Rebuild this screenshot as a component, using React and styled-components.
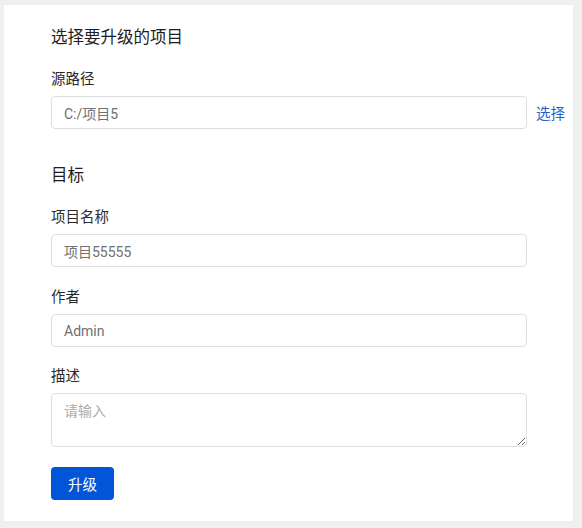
import React from 'react';
import styled, { createGlobalStyle } from 'styled-components';

const GlobalStyle = createGlobalStyle`
  html, body {
    margin: 0;
    padding: 0;
    background: #efefef;
  }
  body {
    font-family: Roboto, "Noto Sans CJK SC", sans-serif;
    color: #222;
  }
`;

const Page = styled.div`
  padding: 5px 9px 7px 4px;
`;

const Card = styled.div`
  background: #fff;
  height: 516px;
  box-sizing: border-box;
  padding: 21px 0 0 47px;
`;

const Heading = styled.h2`
  margin: 0 0 ${(p) => p.gap || 20}px;
  font-size: 16.5px;
  font-weight: 400;
  line-height: 24px;
  color: #1e1e1e;
`;

const Field = styled.div`
  margin-bottom: ${(p) => p.gap || 21}px;
`;

const Label = styled.label`
  display: block;
  font-size: 14.5px;
  line-height: 20px;
  color: #2a2a2a;
  margin-bottom: 6px;
`;

const Row = styled.div`
  display: flex;
  align-items: center;
  gap: 9px;
`;

const TextInput = styled.input`
  width: 476px;
  height: 33px;
  box-sizing: border-box;
  border: 1px solid #dedede;
  border-radius: 4px;
  padding: 0 12px;
  font-family: Roboto, "Noto Sans CJK SC", sans-serif;
  font-size: 14px;
  color: #707070;
  background: #fff;
  outline: none;
`;

const TextArea = styled.textarea`
  display: block;
  width: 476px;
  height: 54px;
  box-sizing: border-box;
  border: 1px solid #dedede;
  border-radius: 4px;
  padding: 6px 12px;
  font-family: Roboto, "Noto Sans CJK SC", sans-serif;
  font-size: 14px;
  color: #707070;
  outline: none;

  &::placeholder {
    color: #ababab;
  }
`;

const LinkButton = styled.a`
  font-size: 14.5px;
  color: #1f5fcf;
  text-decoration: none;
  cursor: pointer;
`;

const PrimaryButton = styled.button`
  width: 63px;
  height: 33px;
  border: none;
  border-radius: 4px;
  background: #0056d6;
  color: #fff;
  font-family: Roboto, "Noto Sans CJK SC", sans-serif;
  font-size: 14.5px;
  cursor: pointer;
`;

export default function App() {
  return (
    <Page>
      <GlobalStyle />
      <Card>
        <Heading>选择要升级的项目</Heading>
        <Field gap={35}>
          <Label>源路径</Label>
          <Row>
            <TextInput defaultValue="C:/项目5" />
            <LinkButton>选择</LinkButton>
          </Row>
        </Field>

        <Heading>目标</Heading>
        <Field>
          <Label>项目名称</Label>
          <TextInput defaultValue="项目55555" />
        </Field>
        <Field gap={20}>
          <Label>作者</Label>
          <TextInput defaultValue="Admin" />
        </Field>
        <Field gap={20}>
          <Label>描述</Label>
          <TextArea placeholder="请输入" />
        </Field>
        <PrimaryButton>升级</PrimaryButton>
      </Card>
    </Page>
  );
}
